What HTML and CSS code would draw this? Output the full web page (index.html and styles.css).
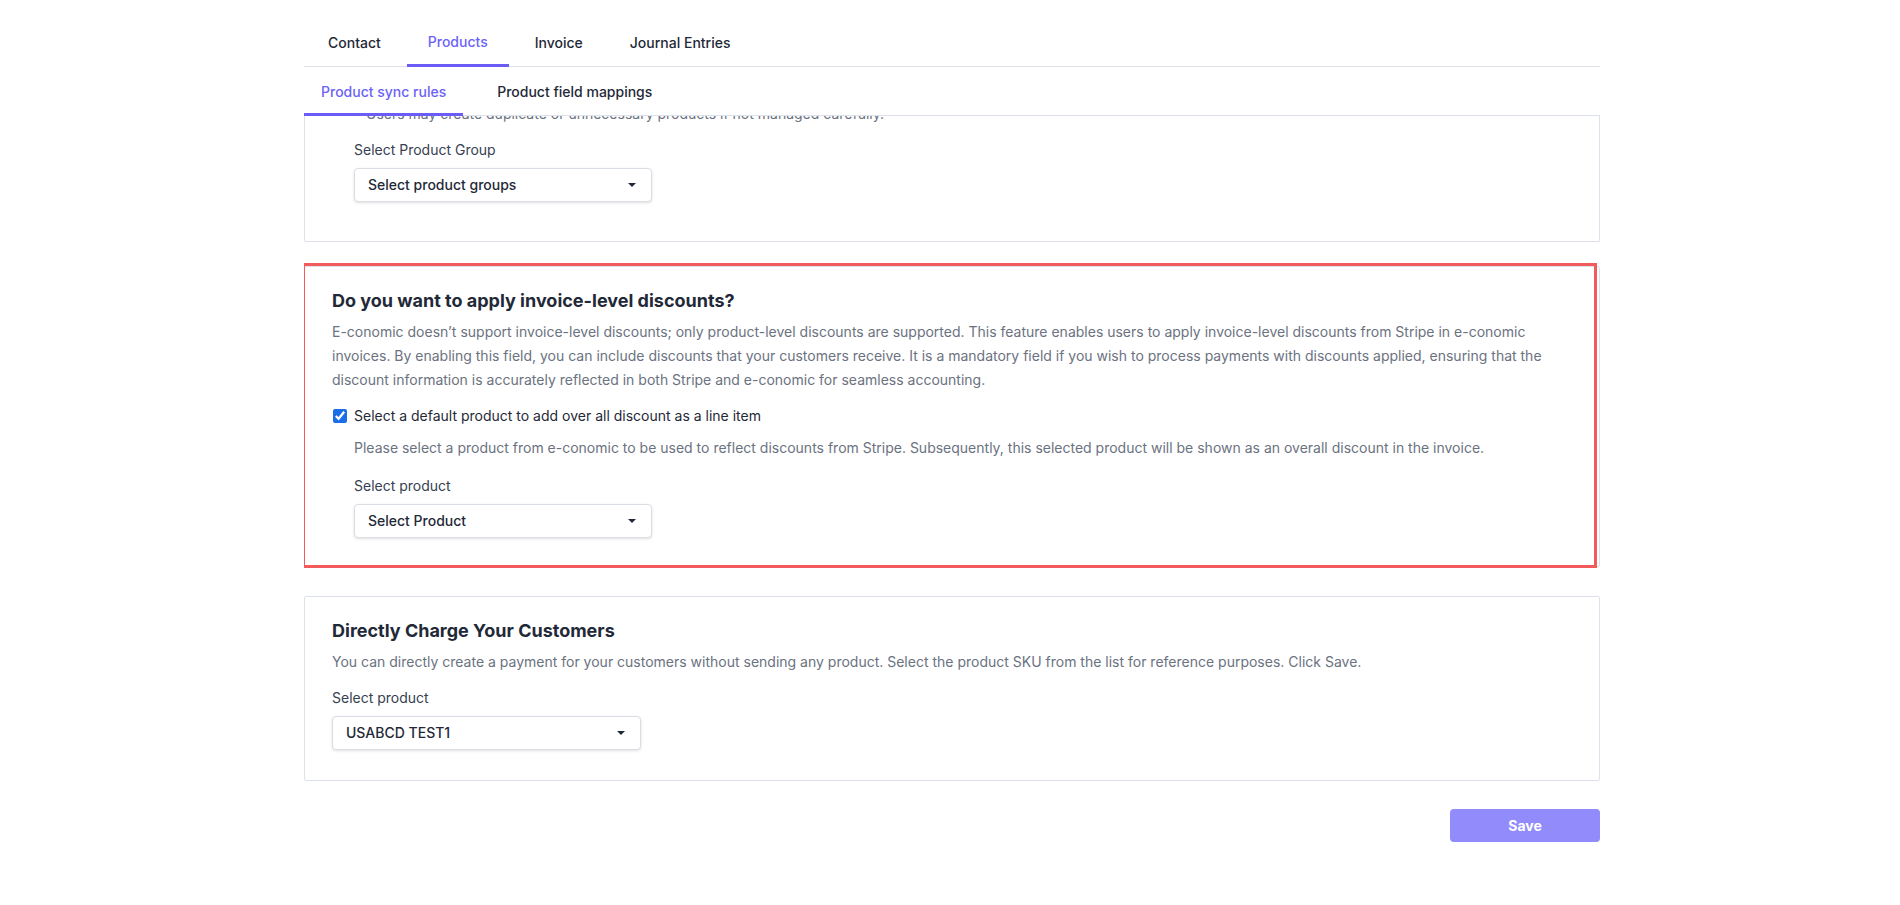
FILE: index.html
```html
<!DOCTYPE html>
<html lang="en">
<head>
    <meta charset="UTF-8">
    <meta name="viewport" content="width=device-width, initial-scale=1.0">
    <title>Products - Sync settings</title>
    <link rel="stylesheet" href="styles.css">
</head>
<body>
    <div class="page">
        <nav class="tabs">
            <a class="tab">Contact</a>
            <a class="tab active">Products</a>
            <a class="tab">Invoice</a>
            <a class="tab">Journal Entries</a>
        </nav>
        <nav class="subtabs">
            <a class="subtab active">Product sync rules</a>
            <a class="subtab">Product field mappings</a>
        </nav>

        <div class="content">
            <div class="card card-cut">
                <ul class="notes">
                    <li>Users may create duplicate or unnecessary products if not managed carefully.</li>
                </ul>
                <div class="nested">
                    <label class="field-label">Select Product Group</label>
                    <div class="dropdown">Select product groups</div>
                </div>
            </div>

            <div class="card highlighted">
                <h2>Do you want to apply invoice-level discounts?</h2>
                <p class="desc">E-conomic doesn’t support invoice-level discounts; only product-level discounts are supported. This feature enables users to apply invoice-level discounts from Stripe in e-conomic invoices. By enabling this field, you can include discounts that your customers receive. It is a mandatory field if you wish to process payments with discounts applied, ensuring that the discount information is accurately reflected in both Stripe and e-conomic for seamless accounting.</p>
                <label class="check-row">
                    <input type="checkbox" checked>
                    <span>Select a default product to add over all discount as a line item</span>
                </label>
                <div class="nested">
                    <p class="hint">Please select a product from e-conomic to be used to reflect discounts from Stripe. Subsequently, this selected product will be shown as an overall discount in the invoice.</p>
                    <label class="field-label">Select product</label>
                    <div class="dropdown">Select Product</div>
                </div>
            </div>

            <div class="card">
                <h2>Directly Charge Your Customers</h2>
                <p class="desc">You can directly create a payment for your customers without sending any product. Select the product SKU from the list for reference purposes. Click Save.</p>
                <label class="field-label">Select product</label>
                <div class="dropdown wide">USABCD TEST1</div>
            </div>

            <div class="actions">
                <button class="btn-save">Save</button>
            </div>
        </div>
    </div>
</body>
</html>
```

FILE: styles.css
```css
body {
    margin: 0;
    padding: 0 0 0 4px;
    background: #ffffff;
    font-family: Inter, 'Noto Sans', 'Liberation Sans', sans-serif;
    color: #1f2937;
}
.page {
    width: 1296px;
    margin: 0 auto;
    padding-top: 22px;
}
.tabs {
    display: flex;
    gap: 5px;
    padding-left: 3px;
    border-bottom: 1px solid #dde2ea;
}
.tab {
    font-size: 14px;
    font-weight: 500;
    line-height: 20px;
    color: #1f2937;
    padding: 11px 21px;
    border-bottom: 3px solid transparent;
    margin-bottom: -1px;
    cursor: pointer;
}
.tab.active {
    color: #6c63f6;
    border-bottom-color: #6a5cf5;
    padding-top: 10px;
    padding-bottom: 12px;
}
.subtabs {
    display: flex;
    gap: 17px;
    border-bottom: 1px solid #dde2ea;
    position: relative;
    z-index: 2;
    background: #ffffff;
}
.subtab {
    font-size: 14px;
    font-weight: 500;
    line-height: 20px;
    color: #1f2937;
    padding: 15px 17px 11px;
    border-bottom: 3px solid transparent;
    margin-bottom: -1px;
    cursor: pointer;
}
.subtab.active {
    color: #6c63f6;
    border-bottom-color: #6a5cf5;
}
.content {
    overflow: hidden;
    padding-bottom: 40px;
}
.card {
    border: 1px solid #dde2ea;
    border-radius: 2px;
    padding: 20px 27px 30px;
    position: relative;
}
.card + .card {
    margin-top: 24px;
}
.card-cut {
    margin-top: -13px;
    padding-top: 0;
    padding-bottom: 39px;
    border-top: none;
}
.highlighted {
    padding-bottom: 28px;
    margin-bottom: 29px;
}
.highlighted + .card {
    margin-top: 0;
}
.highlighted::after {
    content: '';
    position: absolute;
    top: -4px;
    left: -3px;
    right: 2px;
    bottom: -2px;
    border: 3px solid #f25a5c;
    pointer-events: none;
}
.notes {
    margin: 0;
    padding-left: 34px;
    list-style: none;
    font-size: 14px;
    line-height: 21px;
    color: #6b7280;
}
h2 {
    margin: 0;
    font-size: 18px;
    font-weight: 700;
    line-height: 27px;
    color: #1f2937;
}
.desc {
    margin: 6px 0 0;
    font-size: 14px;
    line-height: 24px;
    color: #6b7280;
}
.nested {
    padding-left: 22px;
}
.card-cut .nested {
    margin-top: 16px;
}
.field-label {
    display: block;
    font-size: 14px;
    line-height: 20px;
    color: #374151;
    margin-bottom: 8px;
}
.desc + .field-label {
    margin-top: 14px;
}
.check-row {
    display: flex;
    align-items: center;
    gap: 7px;
    margin-top: 14px;
    font-size: 14px;
    line-height: 20px;
    color: #1f2937;
}
.check-row input {
    margin: 0 0 0 1px;
    width: 14px;
    height: 14px;
    accent-color: #1a6fe8;
}
.hint {
    margin: 12px 0 18px;
    font-size: 14px;
    line-height: 20px;
    color: #6b7280;
}
.dropdown {
    position: relative;
    box-sizing: border-box;
    width: 298px;
    height: 34px;
    padding: 0 40px 0 13px;
    border: 1px solid #d9dde4;
    border-radius: 4px;
    box-shadow: 0 1px 3px rgba(0, 0, 0, 0.12);
    font-size: 14px;
    font-weight: 500;
    line-height: 32px;
    color: #1f2937;
    background: #ffffff;
    cursor: pointer;
}
.dropdown::after {
    content: '';
    position: absolute;
    right: 15px;
    top: 14px;
    border-left: 4px solid transparent;
    border-right: 4px solid transparent;
    border-top: 4px solid #1f2937;
}
.dropdown.wide {
    width: 309px;
}
.actions {
    display: flex;
    justify-content: flex-end;
    margin-top: 28px;
}
.btn-save {
    width: 150px;
    height: 33px;
    border: none;
    border-radius: 4px;
    background: #918bfb;
    color: #ffffff;
    font-family: Inter, 'Noto Sans', sans-serif;
    font-size: 14px;
    font-weight: 700;
    cursor: pointer;
}
```
